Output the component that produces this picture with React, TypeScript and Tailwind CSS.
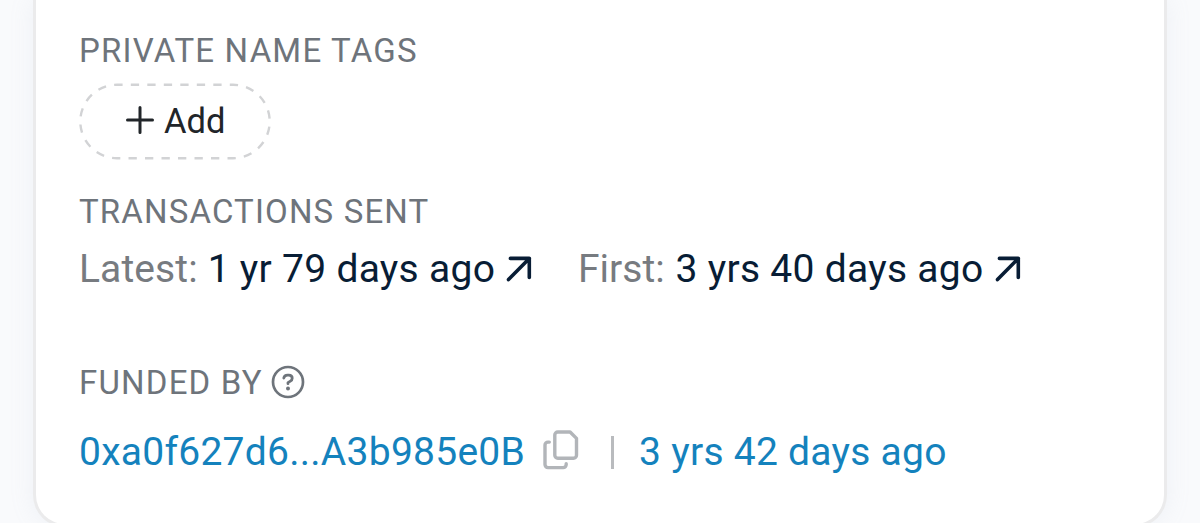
import type { ReactNode } from "react";

function SectionTitle({ children }: { children: ReactNode }) {
	return (
		<h4 className="flex h-10 items-center whitespace-nowrap text-[33px] leading-10 font-normal text-[#6e747b]">
			{children}
		</h4>
	);
}

function PlusIcon() {
	return (
		<svg className="h-7 w-7 shrink-0" viewBox="0 0 28 28" fill="none" stroke="currentColor" strokeWidth="3" strokeLinecap="round">
			<path d="M14 1.5v25M1.5 14h25" />
		</svg>
	);
}

function ArrowIcon() {
	return (
		<svg className="h-[26px] w-[26px] shrink-0" viewBox="0 0 26 26" fill="none" stroke="currentColor" strokeWidth="3.6" strokeLinecap="round" strokeLinejoin="round">
			<path d="M4.4 2.4h18.9v19M23.3 2.4L2.5 23.6" />
		</svg>
	);
}

function HelpIcon() {
	return (
		<svg className="h-[34px] w-[34px] shrink-0" viewBox="0 0 34 34" fill="none" stroke="currentColor" strokeLinecap="round" strokeLinejoin="round">
			<circle cx="17" cy="17" r="15" strokeWidth="2.7" />
			<path d="M12.8 13.1c.4-2 1.8-3 3.7-3h1.3c2 0 3.4 1.3 3.4 3.1 0 1.3-.7 2.2-1.8 2.9L17 17.6v1.1" strokeWidth="2.8" />
			<circle cx="17" cy="23.5" r="2" fill="currentColor" stroke="none" />
		</svg>
	);
}

function CopyIcon() {
	return (
		<svg className="h-10 w-9 shrink-0" viewBox="0 0 36 40" fill="none" stroke="currentColor" strokeWidth="3.4" strokeLinecap="round" strokeLinejoin="round">
			<path d="M14.8 2h12.3l6.4 6.4v16.8a3 3 0 0 1-3 3H14.8a3 3 0 0 1-3-3V5a3 3 0 0 1 3-3z" />
			<path d="M6.3 12.1H5a3 3 0 0 0-3 3v19.5a3 3 0 0 0 3 3h15.2a3 3 0 0 0 3-3v-.9" />
		</svg>
	);
}

export default function App() {
	return (
		<div className="h-[523px] overflow-hidden bg-[#f9fafc] px-[33px] font-[Roboto,sans-serif]">
			<div className="h-[527px] rounded-b-[32px] border-x-[3px] border-b-[3px] border-[#ebebec] bg-white pl-[43px] shadow-[0_0_24px_rgba(160,174,200,0.13)]">
				<section className="pt-[31px]">
					<SectionTitle>
						<span className="tracking-[1.2px]">PRIVATE NAME TAGS</span>
					</SectionTitle>
					<button className="relative mt-3 flex h-[77px] w-[192px] items-center pb-px pl-[47px] text-[34.5px] leading-10 text-[#212529]">
						<svg className="absolute inset-0 h-full w-full" viewBox="0 0 192 77" fill="none">
							<rect x="1.3" y="1.8" width="189.4" height="73.4" rx="36.7" stroke="#d2d3d5" strokeWidth="2.4" strokeDasharray="8.3 8.2" strokeDashoffset="2.7" />
						</svg>
						<span className="mb-0.5">
							<PlusIcon />
						</span>
						<span className="ml-2.5">Add</span>
					</button>
				</section>

				<section className="mt-8">
					<SectionTitle>
						<span className="tracking-[1.15px]">TRANSACTIONS SENT</span>
					</SectionTitle>
					<div className="mt-[17px] flex h-10 whitespace-nowrap text-[39px] leading-10 tracking-[0.28px] text-[#081d35]">
						<div className="flex w-[499px] items-center">
							<span className="mr-2.5 tracking-[0.1px] text-[#777b80]">Latest:</span>
							<span>1 yr 79 days ago</span>
							<span className="mb-px ml-[11px]">
								<ArrowIcon />
							</span>
						</div>
						<div className="flex items-center">
							<span className="mr-[11px] tracking-normal text-[#777b80]">First:</span>
							<span>3 yrs 40 days ago</span>
							<span className="mb-px ml-3">
								<ArrowIcon />
							</span>
						</div>
					</div>
				</section>

				<section className="mt-[74px]">
					<SectionTitle>
						<span className="tracking-[1.2px]">FUNDED BY</span>
						<span className="mb-0.5 ml-2">
							<HelpIcon />
						</span>
					</SectionTitle>
					<div className="mt-[29px] flex h-10 items-center whitespace-nowrap text-[39px] leading-10 tracking-[0.26px] text-[#1482bd]">
						<a href="#">0xa0f627d6...A3b985e0B</a>
						<span className="mb-1 ml-[18px] text-[#b2b5b9]">
							<CopyIcon />
						</span>
						<span className="ml-8 h-[33px] w-[3px] bg-[#b9bbbe]" />
						<a href="#" className="ml-[25px]">
							3 yrs 42 days ago
						</a>
					</div>
				</section>
			</div>
		</div>
	);
}
